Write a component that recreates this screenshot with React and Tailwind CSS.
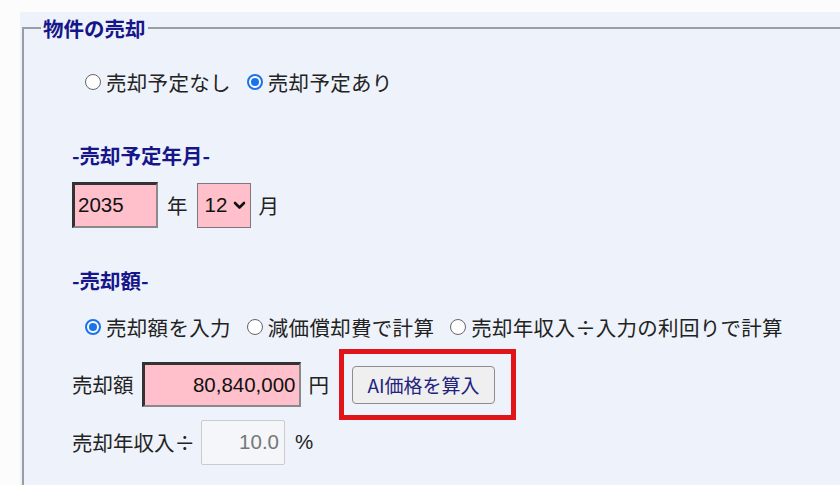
import React from 'react';

const Radio = ({ checked }) =>
  checked ? (
    <span className="inline-flex w-[16px] h-[16px] rounded-full border-2 border-[#1a73e8] bg-white items-center justify-center mr-[5px] shrink-0">
      <span className="w-[8px] h-[8px] rounded-full bg-[#1a73e8]" />
    </span>
  ) : (
    <span className="inline-block w-[16px] h-[16px] rounded-full border border-[#666] bg-white mr-[5px] shrink-0" />
  );

const Div = () => <span className="inline-block w-[20.5px] text-center">÷</span>;

const RadioRow = ({ items }) => (
  <div className="flex items-center h-[40px] pl-[13px]">
    {items.map((item, i) => (
      <label key={i} className={`flex items-center ${i > 0 ? 'ml-[16px]' : ''}`}>
        <Radio checked={item.checked} />
        <span className="tracking-[0.3px]">{item.label}</span>
      </label>
    ))}
  </div>
);

const SectionLabel = ({ children }) => (
  <div className="h-[30px] flex items-center font-bold text-[#16168a]">{children}</div>
);

const num = { fontFamily: '"Liberation Sans", "Noto Sans CJK JP", sans-serif' };

const App = () => {
  return (
    <div
      className="w-[840px] h-[485px] overflow-hidden bg-[#fcfcfc] pt-[12px] pl-[20px] text-[20.5px] text-[#222] leading-none"
      style={{ fontFamily: '"Noto Sans CJK JP", sans-serif' }}
    >
      <div className="bg-[#eef2fa] h-full pt-[3px] pl-[2px]">
        <fieldset className="border-2 border-r-0 border-[#9a9ea3] p-0 m-0 min-h-[520px]">
          <legend className="ml-[17px] px-[2px] h-[26px] flex items-center font-bold text-[#16168a]">
            物件の売却
          </legend>

          <div className="pl-[48px] pt-[21px]">
            <RadioRow
              items={[
                { label: '売却予定なし', checked: false },
                { label: '売却予定あり', checked: true },
              ]}
            />

            {/* 売却予定年月 */}
            <div className="mt-[38px]">
              <SectionLabel>-売却予定年月-</SectionLabel>
            </div>
            <div className="mt-[12px] flex items-center h-[46px]">
              <div
                className="w-[86px] h-[46px] bg-[#ffc0cb] border-t-[3px] border-l-[3px] border-r-2 border-b-2 border-t-[#333] border-l-[#333] border-r-[#8a8a8a] border-b-[#8a8a8a] flex items-center pl-[3px] text-[#111]"
                style={num}
              >
                2035
              </div>
              <span className="ml-[9px]">年</span>
              <div className="ml-[9px] w-[54px] h-[45px] bg-[#ffc0cb] border border-[#7a7a7a] flex items-center pl-[7px] text-[#111]" style={num}>
                12
                <svg width="13" height="9" viewBox="0 0 13 9" className="ml-[6px]">
                  <path d="M2 2 L6.5 6.5 L11 2" fill="none" stroke="#111" strokeWidth="2.6" strokeLinecap="round" strokeLinejoin="round" />
                </svg>
              </div>
              <span className="ml-[8px]">月</span>
            </div>

            {/* 売却額 */}
            <div className="mt-[37px]">
              <SectionLabel>-売却額-</SectionLabel>
            </div>
            <div className="mt-[12px]">
              <RadioRow
                items={[
                  { label: '売却額を入力', checked: true },
                  { label: '減価償却費で計算', checked: false },
                  { label: <>売却年収入<Div />入力の利回りで計算</>, checked: false },
                ]}
              />
            </div>

            <div className="mt-[15px] flex items-center h-[45px]">
              <span>売却額</span>
              <div
                className="ml-[8px] w-[159px] h-[45px] bg-[#ffc0cb] border-t-[3px] border-l-[3px] border-r-2 border-b-2 border-t-[#333] border-l-[#333] border-r-[#8a8a8a] border-b-[#8a8a8a] flex items-center justify-end pr-[3px] text-[#111]"
                style={num}
              >
                80,840,000
              </div>
              <span className="ml-[8px]">円</span>
              <div className="relative ml-[23px]">
                <button className="w-[143px] h-[38px] rounded-[4px] border border-[#8c8c8c] bg-[#efefef] text-[19px] text-[#23237f] flex items-center justify-center">
                  AI価格を算入
                </button>
                <div className="absolute left-[-13px] right-[-21px] top-[-17px] bottom-[-16px] border-[5px] border-[#e01419] pointer-events-none" />
              </div>
            </div>

            <div className="mt-[13px] flex items-center h-[45px]">
              <span>売却年収入<Div /></span>
              <div
                className="ml-[6px] w-[84px] h-[45px] bg-[#f4f6fa] border border-[#c9cbcf] rounded-[2px] flex items-center justify-end pr-[5px] text-[#777]"
                style={num}
              >
                10.0
              </div>
              <span className="ml-[10px]" style={num}>%</span>
            </div>
          </div>
        </fieldset>
      </div>
    </div>
  );
};

export default App;
